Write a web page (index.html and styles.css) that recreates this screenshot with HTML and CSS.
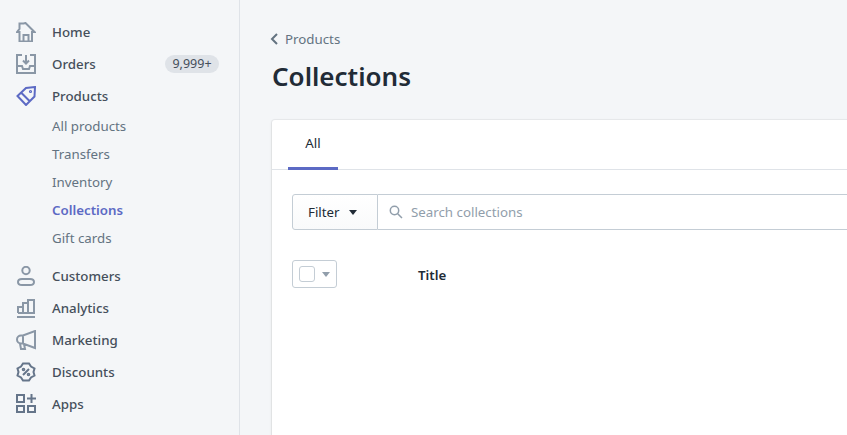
FILE: index.html
```html
<!DOCTYPE html>
<html lang="en">
<head>
<meta charset="utf-8">
<title>Collections</title>
<link rel="stylesheet" href="styles.css">
</head>
<body>
<div class="app">
  <nav class="side">
    <a class="item"><svg class="ico" viewBox="0 0 20 20"><path d="M3.500 19.500V10H1l2.500-3V1.500h4L9.500 1l9 9H16v9.500zM7.500 19.500V13h5v6.500"/></svg><span>Home</span></a>
    <a class="item"><svg class="ico" viewBox="0 0 20 20"><path d="M6 1H1v18h18V1h-5M1 12h5l1 3h6l1-3h5M10 1v8M7 6.500l3 3 3-3"/></svg><span>Orders</span><b class="badge">9,999+</b></a>
    <a class="item active"><svg class="ico" viewBox="0 0 20 20"><path d="M1.500 10L10 2l9-1-.500 9.500L10 19zM5.500 7l8 8"/><circle cx="14.500" cy="5.500" r=".6"/></svg><span>Products</span></a>
    <div class="sub">
      <a>All products</a><a>Transfers</a><a>Inventory</a><a class="on">Collections</a><a>Gift cards</a>
    </div>
    <a class="item"><svg class="ico" viewBox="0 0 20 20"><circle cx="10" cy="4.500" r="3.700"/><path d="M6 13h8c2.500 0 4 1.300 4 3s-1.500 3-4 3H6c-2.500 0-4-1.300-4-3s1.500-3 4-3z"/></svg><span>Customers</span></a>
    <a class="item"><svg class="ico" viewBox="0 0 20 20"><path d="M1 19h18M2 15V9h5v6M7 15V5h5v10M12 15V2h6v13H2"/></svg><span>Analytics</span></a>
    <a class="item"><svg class="ico" viewBox="0 0 20 20"><path d="M19 1v17l-12-4.500H5a4 4 0 0 1 0-8h2zM7 5.500v8M4 13.500l1 5.500h4l-1-5"/></svg><span>Marketing</span></a>
    <a class="item"><svg class="ico dark" viewBox="0 0 20 20"><path d="M7 1.500h6l2 3 3.500 2-1 3.500 1 3.500-3.500 2-2 3H7l-2-3-3.500-2 1-3.500-1-3.500 3.500-2zM7 13l6-6"/><circle cx="7.500" cy="7.500" r=".8"/><circle cx="12.500" cy="12.500" r=".8"/></svg><span>Discounts</span></a>
    <a class="item"><svg class="ico dark" viewBox="0 0 20 20"><path d="M1 1h7v7H1zM1 12h7v6H1zM12 12h7v6h-7zM15.500 0v9M11 4.500h9"/></svg><span>Apps</span></a>
  </nav>
  <main class="main">
    <a class="crumb"><svg class="chev" viewBox="0 0 8 12"><path d="M7 1L2 6l5 5"/></svg><span>Products</span></a>
    <h1>Collections</h1>
    <section class="card">
      <div class="tabs"><a class="tab">All</a></div>
      <div class="filters">
        <button class="filter">Filter<i class="caret"></i></button>
        <div class="search"><svg class="mag" viewBox="0 0 14 14"><circle cx="5.500" cy="5.500" r="4.200"/><path d="M8.700 8.700l4.300 4.300"/></svg><span>Search collections</span></div>
      </div>
      <div class="head">
        <div class="check"><i class="box"></i><i class="caret grey"></i></div>
        <strong>Title</strong>
      </div>
    </section>
  </main>
</div>
</body>
</html>
```
FILE: styles.css
```css
* { box-sizing: border-box; }
html, body { margin: 0; height: 100%; overflow: hidden; }
body { font-family: "Noto Sans", sans-serif; font-size: 13.300px; color: #212b36; background: #f4f6f8; }
.app { display: flex; width: 847px; height: 435px; overflow: hidden; }
.side { width: 240px; flex: none; border-right: 1px solid #dfe3e8; background: #f4f6f8; padding-top: 16px; }
.item { display: flex; align-items: center; height: 32px; padding: 0 20px 0 16px; color: #454f5b; font-weight: 500; }
.item span { padding-bottom: 1px; }
.ico { width: 20px; height: 20px; margin-right: 16px; fill: none; stroke: #8a97a6; stroke-width: 2; flex: none; }
.ico.dark { stroke: #65758a; }
.item.active .ico { stroke: #5c6ac4; }
.badge { margin-left: auto; width: 54px; height: 18px; line-height: 18px; text-align: center; border-radius: 9px; background: #dfe3e8; font-size: 12.500px; font-weight: 400; }
.sub { display: flex; flex-direction: column; padding: 0 0 8px; }
.sub a { height: 28px; line-height: 28px; padding-left: 52px; color: #637381; }
.sub a.on { color: #5c6ac4; font-weight: 600; }
.main { flex: 1; min-width: 0; height: 435px; display: flex; flex-direction: column; padding: 29px 0 0 32px; overflow: hidden; }
.crumb { display: flex; align-items: center; height: 20px; margin-left: -2px; color: #637381; }
.chev { width: 8px; height: 12px; margin-right: 7px; fill: none; stroke: #637381; stroke-width: 2; }
h1 { margin: 11px 0 0; font-size: 26px; line-height: 32px; font-weight: 600; color: #212b36; }
.card { margin-top: 28px; flex: 1; width: 620px; background: #fff; border-radius: 3px 0 0 0; box-shadow: 0 0 0 1px rgba(63,63,68,.05), 0 1px 3px 0 rgba(63,63,68,.15); }
.tabs { height: 50px; border-bottom: 1px solid #dfe3e8; padding-left: 16px; display: flex; }
.tab { width: 50px; height: 50px; line-height: 46px; text-align: center; border-bottom: 3px solid #5c6ac4; }
.filters { display: flex; height: 36px; margin: 24px 0 0 20px; }
.filter { width: 86px; height: 36px; padding: 0 0 0 15px; border: 1px solid #c4cdd5; border-radius: 3px 0 0 3px; background: linear-gradient(#fff, #f9fafb); font: inherit; color: #212b36; display: flex; align-items: center; gap: 9px; }
.caret { width: 0; height: 0; border: 4px solid transparent; border-top: 5px solid #212b36; border-bottom: 0; }
.caret.grey { border-top-color: #919eab; }
.search { flex: 1; display: flex; align-items: center; border: 1px solid #c4cdd5; border-left: 0; padding-left: 11px; color: #919eab; }
.mag { width: 14px; height: 14px; margin-right: 8px; fill: none; stroke: #919eab; stroke-width: 1.500; }
.head { display: flex; align-items: center; margin: 30px 0 0 20px; }
.check { width: 45px; height: 28px; display: flex; align-items: center; gap: 7px; padding-left: 6px; border: 1px solid #c4cdd5; border-radius: 3px; background: #fff; }
.box { width: 16px; height: 16px; border: 1px solid #c4cdd5; border-radius: 3px; background: #fff; }
.head strong { margin-left: 81px; padding-top: 2px; font-weight: 600; color: #212b36; }
```
